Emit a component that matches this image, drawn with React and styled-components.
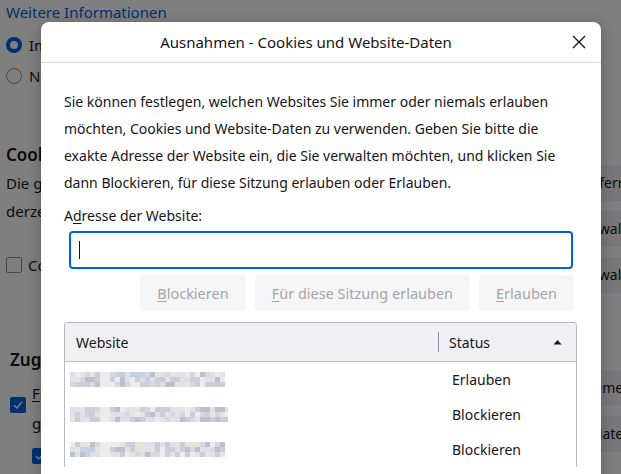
import React from 'react';
import styled, { createGlobalStyle } from 'styled-components';

const GlobalStyle = createGlobalStyle`
  html, body {
    margin: 0;
    padding: 0;
    overflow: hidden;
  }
  body {
    font-family: "Noto Sans", "Open Sans", sans-serif;
    color: #15141a;
  }
`;

const Page = styled.div`
  position: relative;
  width: 621px;
  height: 474px;
  overflow: hidden;
  background: #ffffff;
`;

/* ---------- settings page underneath ---------- */

const Settings = styled.div`
  width: 660px;
  padding: 0 0 0 6px;
  font-size: 15px;
  line-height: 24px;
  color: #15141a;
`;

const MoreLink = styled.a`
  display: block;
  color: #0061e0;
  text-decoration: none;
`;

const RadioRow = styled.div`
  display: flex;
  align-items: center;
  gap: 7px;
  height: 31px;
  margin-top: ${(p) => p.$top || 0}px;
`;

const Radio = styled.span`
  width: 16px;
  height: 16px;
  box-sizing: border-box;
  border-radius: 50%;
  border: ${(p) => (p.$on ? '4px solid #0061e0' : '1px solid #8f8f9d')};
  background: #fff;
`;

const Section = styled.div`
  margin-top: ${(p) => p.$top}px;
  padding-left: ${(p) => p.$indent || 0}px;
`;

const Heading = styled.h2`
  margin: 0;
  font-size: 17px;
  font-weight: 600;
  line-height: 28px;
`;

const SplitRow = styled.div`
  display: grid;
  grid-template-columns: minmax(0, 1fr) auto;
  column-gap: 24px;
  align-items: start;
`;

const LeftColumn = styled.div`
  overflow: hidden;
`;

const Description = styled.p`
  margin: 0;
  line-height: 28px;
  white-space: nowrap;
`;

const ButtonStack = styled.div`
  display: flex;
  flex-direction: column;
  align-items: flex-end;
  gap: 10px;
  margin-top: -4px;
  margin-right: ${(p) => p.$mr || 0}px;
`;

const PageButton = styled.span`
  display: block;
  padding: 6px 12px;
  border-radius: 4px;
  background: #f0f0f4;
  font-size: 14px;
  white-space: nowrap;
`;

const CheckRow = styled.div`
  display: flex;
  align-items: flex-start;
  gap: 6px;
  margin-top: ${(p) => p.$top || 0}px;
  padding-left: ${(p) => p.$indent || 0}px;
`;

const Box = styled.span`
  flex: none;
  width: 16px;
  height: 16px;
  margin-top: ${(p) => p.$mt || 4}px;
  box-sizing: border-box;
  border-radius: 2px;
  border: ${(p) => (p.$on ? 'none' : '1px solid #8f8f9d')};
  background: ${(p) => (p.$on ? '#0061e0' : '#fff')};
  display: flex;
  align-items: center;
  justify-content: center;
`;

const CheckLabel = styled.span`
  line-height: 30px;
  width: 400px;
  flex: none;
`;

const Backdrop = styled.div`
  position: absolute;
  inset: 0;
  background: rgba(0, 0, 0, 0.5);
`;

/* ---------- dialog ---------- */

const Dialog = styled.div`
  position: absolute;
  left: 41px;
  top: 22px;
  width: 560px;
  height: 480px;
  background: #fff;
  border-radius: 8px 8px 0 0;
  box-shadow: 0 2px 14px rgba(0, 0, 0, 0.25);
  display: flex;
  flex-direction: column;
  font-size: 14px;
  color: #15141a;
`;

const Header = styled.div`
  display: flex;
  align-items: center;
  height: 40px;
  padding: 0 8px 0 6px;
  border-bottom: 1px solid #d6d6dc;
`;

const Title = styled.div`
  flex: 1;
  text-align: center;
  font-size: 15px;
`;

const CloseButton = styled.span`
  width: 28px;
  height: 28px;
  display: flex;
  align-items: center;
  justify-content: center;
`;

const Body = styled.div`
  padding: 25px 24px 0 23px;
`;

const Intro = styled.p`
  margin: 0;
  line-height: 27px;
`;

const FieldLabel = styled.label`
  display: block;
  margin-top: 9px;
  line-height: 22px;
`;

const Key = styled.span`
  text-decoration: underline;
  text-underline-offset: 2px;
`;

const Input = styled.div`
  margin: 4px 4px 0 5px;
  height: 38px;
  box-sizing: border-box;
  border: 2px solid #0061e0;
  border-radius: 4px;
  display: flex;
  align-items: center;
  padding-left: 8px;
`;

const Caret = styled.span`
  width: 1px;
  height: 18px;
  background: #15141a;
`;

const ButtonRow = styled.div`
  display: flex;
  justify-content: flex-end;
  gap: 9px;
  margin: 6px 3px 0 0;
`;

const DialogButton = styled.span`
  height: 36px;
  padding: 0 17px;
  border-radius: 4px;
  background: #f6f6f8;
  color: #a4a4a8;
  font-size: 14.5px;
  display: flex;
  align-items: center;
  white-space: nowrap;
`;

const Table = styled.div`
  margin-top: 11px;
  border: 1px solid #b8b8be;
  border-bottom: none;
  border-radius: 4px 4px 0 0;
  overflow: hidden;
`;

const HeadRow = styled.div`
  display: grid;
  grid-template-columns: 373px 1fr;
  height: 38px;
  align-items: center;
  background: #f0f0f4;
  border-bottom: 1px solid #c4c4ca;
`;

const HeadCell = styled.div`
  display: flex;
  align-items: center;
  height: 20px;
  padding: 0 ${(p) => p.$pr || 0}px 0 ${(p) => p.$pl}px;
  border-left: ${(p) => (p.$divider ? '1px solid #8f8f9d' : 'none')};
  justify-content: space-between;
`;

const Row = styled.div`
  display: grid;
  grid-template-columns: 373px 1fr;
  height: 35px;
  align-items: center;
  &:first-of-type {
    margin-top: 2px;
  }
`;

const UrlCell = styled.div`
  padding-left: 5px;
  display: flex;
  align-items: center;
`;

const StatusCell = styled.div`
  padding-left: 14px;
`;

function seeded(seed) {
  let s = seed;
  return () => {
    s = (s * 9301 + 49297) % 233280;
    return s / 233280;
  };
}

const palette = ['#ececef', '#e2e3e7', '#d6d8de', '#cacdd5', '#bcc0ca', '#dde0ea', '#c9cfde', '#e6e3dc'];

const Blurred = ({ seed, width }) => {
  const rnd = seeded(seed);
  const cells = [];
  const cw = 5;
  const ch = 5;
  for (let x = 0; x < width; x += cw) {
    for (let y = 0; y < 15; y += ch) {
      const gap = x > 26 && x < 36;
      const idx = gap ? 0 : Math.floor(rnd() * palette.length);
      cells.push(<rect key={`${x}-${y}`} x={x} y={y} width={cw} height={ch} fill={palette[idx]} />);
    }
  }
  return (
    <svg width={width} height={15} viewBox={`0 0 ${width} 15`}>
      <filter id={`b${seed}`}>
        <feGaussianBlur stdDeviation="0.5" />
      </filter>
      <g filter={`url(#b${seed})`}>{cells}</g>
    </svg>
  );
};

const Check = () => (
  <svg width="12" height="12" viewBox="0 0 12 12">
    <path d="M2 6.2 L4.8 9 L10 3" fill="none" stroke="#fff" strokeWidth="1.4" />
  </svg>
);

const rows = [
  { seed: 11, width: 155, status: 'Erlauben' },
  { seed: 37, width: 158, status: 'Blockieren' },
  { seed: 73, width: 155, status: 'Blockieren' },
];

export default function App() {
  return (
    <Page>
      <GlobalStyle />
      <Settings>
        <MoreLink>Weitere Informationen</MoreLink>
        <RadioRow $top={5}>
          <Radio $on />
          <span>Immer</span>
        </RadioRow>
        <RadioRow>
          <Radio />
          <span>Nie</span>
        </RadioRow>

        <Section $top={50}>
          <Heading>Cookies und Website-Daten</Heading>
          <SplitRow>
            <LeftColumn>
              <Description>
                Die gespeicherten Cookies, Website-Daten und der Cache belegen
                <br />
                derzeit 1,2 GB Speicherplatz.
              </Description>
              <CheckRow $top={28}>
                <Box $mt={4} />
                <span>Cookies und Website-Daten beim Beenden löschen</span>
              </CheckRow>
            </LeftColumn>
            <ButtonStack>
              <PageButton>Daten entfernen…</PageButton>
              <PageButton>Daten verwalten…</PageButton>
              <PageButton>Ausnahmen verwalten…</PageButton>
            </ButtonStack>
          </SplitRow>
        </Section>

        <Section $top={53} $indent={4}>
          <Heading>Zugangsdaten und Passwörter</Heading>
          <SplitRow>
            <LeftColumn>
              <CheckRow $top={4}>
                <Box $on $mt={19}>
                  <Check />
                </Box>
                <CheckLabel>
                  <Key>F</Key>ragen, ob Zugangsdaten und Passwörter für Websites
                  gespeichert werden sollen
                </CheckLabel>
              </CheckRow>
              <CheckRow $top={6} $indent={22}>
                <Box $on $mt={4}>
                  <Check />
                </Box>
                <span>Starke Passwörter erzeugen und vorschlagen</span>
              </CheckRow>
            </LeftColumn>
            <ButtonStack $mr={11}>
              <PageButton>Ausnahmen…</PageButton>
              <PageButton>Gespeicherte Zugangsdaten…</PageButton>
            </ButtonStack>
          </SplitRow>
        </Section>
      </Settings>

      <Backdrop />

      <Dialog>
        <Header>
          <Title>Ausnahmen - Cookies und Website-Daten</Title>
          <CloseButton>
            <svg width="14" height="14" viewBox="0 0 14 14">
              <path d="M1 1 L13 13 M13 1 L1 13" stroke="#15141a" strokeWidth="1.3" fill="none" />
            </svg>
          </CloseButton>
        </Header>
        <Body>
          <Intro>
            Sie können festlegen, welchen Websites Sie immer oder niemals erlauben
            möchten, Cookies und Website-Daten zu verwenden. Geben Sie bitte die
            exakte Adresse der Website ein, die Sie verwalten möchten, und klicken Sie
            dann Blockieren, für diese Sitzung erlauben oder Erlauben.
          </Intro>
          <FieldLabel>
            A<Key>d</Key>resse der Website:
          </FieldLabel>
          <Input>
            <Caret />
          </Input>
          <ButtonRow>
            <DialogButton>
              <Key>B</Key>lockieren
            </DialogButton>
            <DialogButton>
              <Key>F</Key>ür diese Sitzung erlauben
            </DialogButton>
            <DialogButton>
              <Key>E</Key>rlauben
            </DialogButton>
          </ButtonRow>
          <Table>
            <HeadRow>
              <HeadCell $pl={11}>Website</HeadCell>
              <HeadCell $pl={10} $pr={14} $divider>
                <span>Status</span>
                <svg width="9" height="6" viewBox="0 0 9 6">
                  <path d="M0.5 5.5 L4.5 1 L8.5 5.5 Z" fill="#15141a" />
                </svg>
              </HeadCell>
            </HeadRow>
            {rows.map((r) => (
              <Row key={r.seed}>
                <UrlCell>
                  <Blurred seed={r.seed} width={r.width} />
                </UrlCell>
                <StatusCell>{r.status}</StatusCell>
              </Row>
            ))}
          </Table>
        </Body>
      </Dialog>
    </Page>
  );
}
